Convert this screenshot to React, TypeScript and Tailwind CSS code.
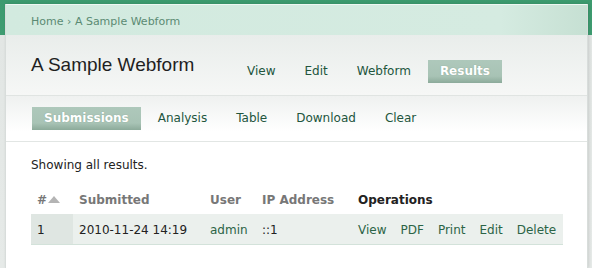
import React from 'react';

const verdana = "font-['DejaVu_Sans',Verdana,sans-serif]";

const TabLink: React.FC<{ label: string; active?: boolean }> = ({ label, active }) =>
  active ? (
    <span className="h-[23px] px-3 leading-[23px] font-bold text-white bg-[linear-gradient(to_bottom,#aec8bb_0%,#a8c3b5_70%,#8caa9a_100%)] [text-shadow:0_0_1px_rgba(60,100,80,0.4)]">
      {label}
    </span>
  ) : (
    <span className="h-[23px] px-3 leading-[23px] text-[#22553d]">{label}</span>
  );

const App: React.FC = () => {
  return (
    <div
      className={`w-[592px] h-[268px] overflow-hidden pt-[4px] pl-[5px] bg-[linear-gradient(to_bottom,#3c9a6e_0px,#3f9d72_35px,#e2e6e4_35px,#e6eae8_100%)] ${verdana} text-[12px]`}
    >
      <div className="w-[583px] h-full bg-white border-l border-r border-[#d8dddb] shadow-[1px_0_3px_rgba(0,0,0,0.12)]">
        {/* breadcrumb */}
        <div className="h-[31px] border-t border-[#eef7f2] bg-[linear-gradient(to_right,#d2eadf_0%,#d5ebe1_85%,#c6e0d3_100%)] pl-[25px] pt-[9px] text-[11px] leading-[15px] text-[#5b8a73]">
          Home › A Sample Webform
        </div>

        {/* page header */}
        <div className="h-[61px] border-b border-[#e0e4e2] bg-[linear-gradient(to_bottom,#e9edeb,#f6f7f6)] pl-[25px] flex items-start">
          <h1 className="w-[204px] mt-[18px] text-[19px] leading-[24px] text-[#1f1f1f] font-['Liberation_Sans',Arial,sans-serif]">
            A Sample Webform
          </h1>
          <div className="mt-[25px] flex gap-[5px]">
            <TabLink label="View" />
            <TabLink label="Edit" />
            <TabLink label="Webform" />
            <TabLink label="Results" active />
          </div>
        </div>

        {/* secondary tabs */}
        <div className="h-[46px] border-b border-[#e2e6e4] bg-[linear-gradient(to_bottom,#eff1f0,#ffffff_80%)] pl-[26px] pt-[11px] flex gap-[5px]">
          <TabLink label="Submissions" active />
          <TabLink label="Analysis" />
          <TabLink label="Table" />
          <TabLink label="Download" />
          <TabLink label="Clear" />
        </div>

        {/* content */}
        <div className="pl-[25px] pt-[15px]">
          <p className="leading-[16px] text-[#222]">Showing all results.</p>

          <table className="mt-[13px] w-[532px] table-fixed border-collapse leading-[16px]">
            <colgroup>
              <col className="w-[42px]" />
              <col className="w-[131px]" />
              <col className="w-[52px]" />
              <col className="w-[96px]" />
              <col />
            </colgroup>
            <thead>
              <tr className="text-left font-bold text-[#777]">
                <th className="pl-[6px] pt-[6px] pb-[6px]">
                  <span className="inline-flex items-center">
                    #
                    <svg width="12" height="7" viewBox="0 0 12 7" className="ml-[1px] mt-[-2px]">
                      <polygon points="0,7 6,0 12,7" fill="#b4b4b4" />
                    </svg>
                  </span>
                </th>
                <th className="pl-[6px] pt-[6px] pb-[6px]">Submitted</th>
                <th className="pl-[6px] pt-[6px] pb-[6px]">User</th>
                <th className="pl-[6px] pt-[6px] pb-[6px]">IP Address</th>
                <th className="pl-[6px] pt-[6px] pb-[6px] text-[#222]">Operations</th>
              </tr>
            </thead>
            <tbody>
              <tr className="bg-[#ebf0ed] border-b border-[#d3e2da] text-[#222]">
                <td className="pl-[6px] pt-[8px] pb-[6px] bg-[#dfe6e2]">1</td>
                <td className="pl-[6px] pt-[8px] pb-[6px]">2010-11-24 14:19</td>
                <td className="pl-[6px] pt-[8px] pb-[6px] text-[#2b6446]">admin</td>
                <td className="pl-[6px] pt-[8px] pb-[6px]">::1</td>
                <td className="pl-[6px] pt-[8px] pb-[6px]">
                  <div className="flex gap-[14px] text-[#2b6446]">
                    <span>View</span>
                    <span>PDF</span>
                    <span>Print</span>
                    <span>Edit</span>
                    <span>Delete</span>
                  </div>
                </td>
              </tr>
            </tbody>
          </table>
        </div>
      </div>
    </div>
  );
};

export default App;
